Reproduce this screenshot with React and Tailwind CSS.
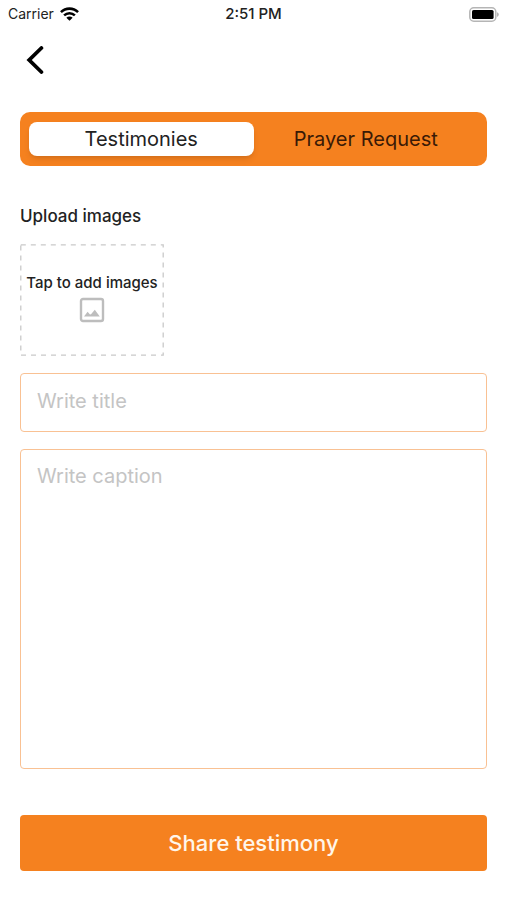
import React, { useState } from 'react';

const tabs = ['Testimonies', 'Prayer Request'];

const StatusBar = () => (
  <div className="grid grid-cols-3 items-center h-7 px-2 text-[#222]">
    <div className="flex items-center gap-1.5 text-[14px] leading-5">
      <span>Carrier</span>
      <svg className="w-[19px] h-[14px]" viewBox="0 0 18 13" fill="none" stroke="#000" strokeWidth="2.4">
        <path d="M0.9 4.7C5.4 0.3 12.6 0.3 17.1 4.7" />
        <path d="M3.9 7.8C6.8 5 11.2 5 14.1 7.8" />
        <path d="M9 13L6 10C7.7 8.5 10.3 8.5 12 10Z" fill="#000" stroke="none" />
      </svg>
    </div>
    <div className="text-center text-[15px] leading-5 font-medium">2:51 PM</div>
    <svg className="justify-self-end w-[31px] h-[15px]" viewBox="0 0 31 15">
      <rect x="1.8" y="0.8" width="26" height="13.4" rx="4" fill="#fff" stroke="#b5b5b5" strokeWidth="1.5" />
      <rect x="4" y="3" width="21.6" height="9" rx="1.6" fill="#000" />
      <path d="M29 5.2C31.4 6 31.4 9 29 9.8Z" fill="#b5b5b5" />
    </svg>
  </div>
);

const ImageIcon = () => (
  <svg className="w-[26px] h-[26px]" viewBox="0 0 26 26">
    <rect x="2" y="2" width="22" height="22" rx="2" fill="none" stroke="#bdbdbd" strokeWidth="2.4" />
    <path d="M5 19.5L8.6 14.8L11 17.6L12 17.2L15.8 12.8L20.8 19.5Z" fill="#bdbdbd" />
  </svg>
);

const App = () => {
  const [activeTab, setActiveTab] = useState('Testimonies');
  const [title, setTitle] = useState('');
  const [caption, setCaption] = useState('');

  return (
    <div className="min-h-screen bg-white font-['Inter','Liberation_Sans',sans-serif] text-[#222]">
      <StatusBar />

      <main className="flex flex-col px-5">
        <button type="button" aria-label="Back" className="flex items-center self-start h-16 px-1.5">
          <svg className="w-[18px] h-7" viewBox="0 0 18 28" fill="none" stroke="#000" strokeWidth="3.8" strokeLinecap="round" strokeLinejoin="miter">
            <path d="M15.4 2L3.2 14L15.4 26" />
          </svg>
        </button>

        <div className="grid grid-cols-2 mt-5 px-[9px] py-2.5 rounded-[10px] bg-[#f5811f]">
          {tabs.map((tab) => (
            <button
              key={tab}
              type="button"
              aria-pressed={activeTab === tab}
              onClick={() => setActiveTab(tab)}
              className={
                activeTab === tab
                  ? 'h-[34px] rounded-lg bg-white text-[20px] shadow-md'
                  : 'h-[34px] rounded-lg text-[20px] text-[#3a1a06]'
              }
            >
              {tab}
            </button>
          ))}
        </div>

        <label htmlFor="images" className="mt-[38px] text-[17px] leading-6 font-medium">Upload images</label>
        <button
          id="images"
          type="button"
          className="relative flex flex-col items-center justify-center gap-1 self-start w-36 h-28 mt-4 pb-1 text-[15px] leading-5 font-medium whitespace-nowrap"
        >
          <svg className="absolute inset-0 w-full h-full" viewBox="0 0 144 112" fill="none">
            <rect x="0.8" y="0.8" width="142.4" height="110.4" stroke="#c9c9c9" strokeWidth="1.3" strokeDasharray="5 5" />
          </svg>
          <span>Tap to add images</span>
          <ImageIcon />
        </button>

        <input
          type="text"
          aria-label="Title"
          placeholder="Write title"
          value={title}
          onChange={(e) => setTitle(e.target.value)}
          className="h-[59px] mt-[17px] px-4 pb-1 rounded border border-[#f9c193] text-[20px] outline-none placeholder:text-[#c4c4c4]"
        />
        <textarea
          aria-label="Caption"
          placeholder="Write caption"
          value={caption}
          onChange={(e) => setCaption(e.target.value)}
          className="h-80 mt-[17px] px-4 py-3 rounded border border-[#f9c193] text-[20px] leading-7 resize-none outline-none placeholder:text-[#c4c4c4]"
        />

        <button type="button" className="h-14 mt-[46px] mb-7 rounded bg-[#f5811f] text-[22px] font-medium text-[#fff6ea]">
          Share testimony
        </button>
      </main>
    </div>
  );
};

export default App;
